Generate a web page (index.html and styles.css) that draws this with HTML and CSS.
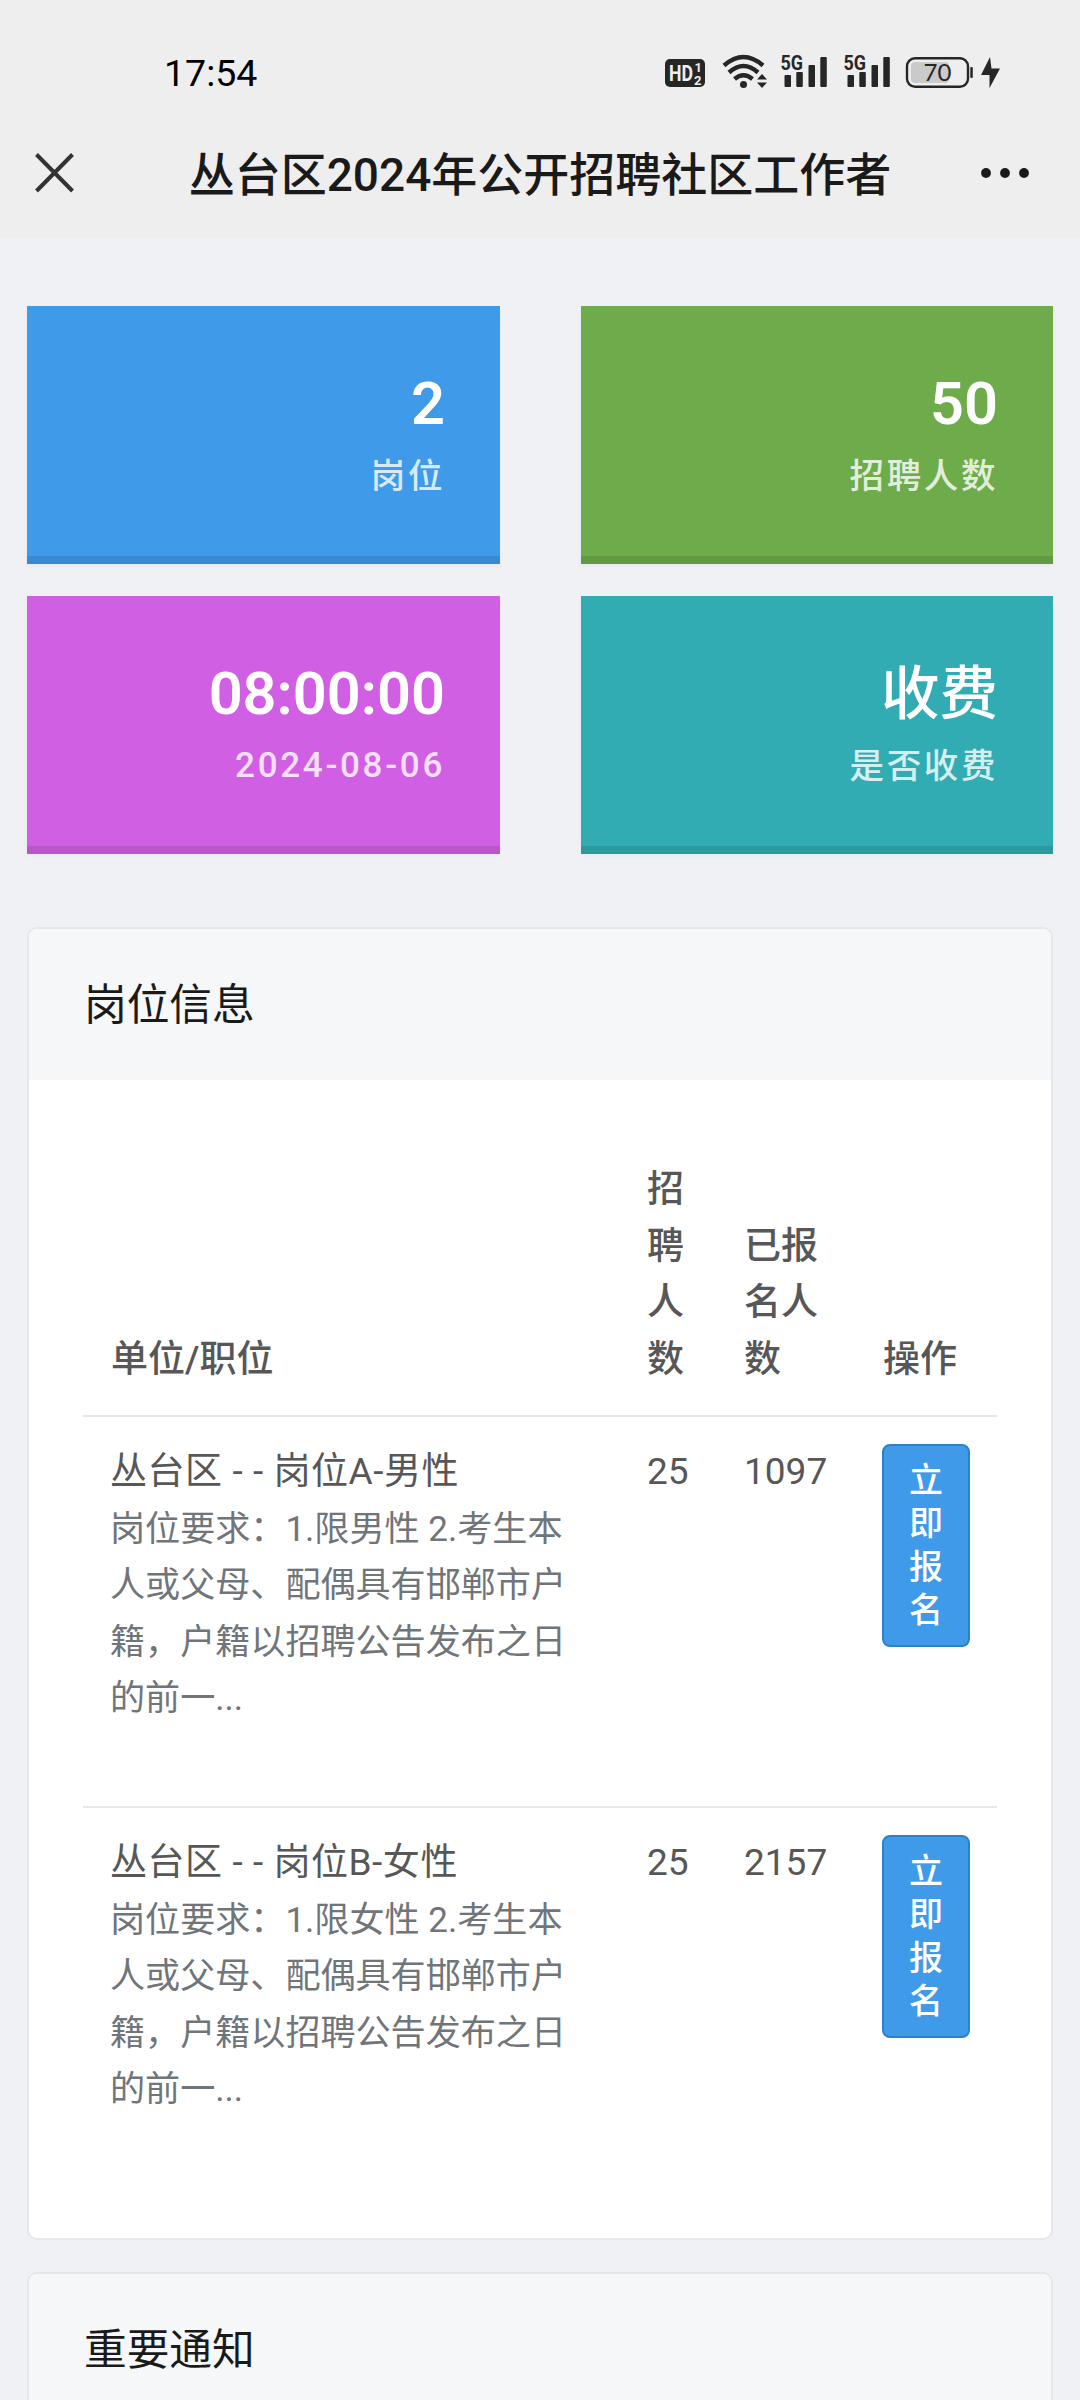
FILE: index.html
```html
<!DOCTYPE html>
<html lang="zh-CN">
<head>
<meta charset="utf-8">
<title>丛台区2024年公开招聘社区工作者</title>
<link rel="stylesheet" href="styles.css">
</head>
<body>
<header class="top">
  <div class="status">
    <span class="clock">17:54</span>
    <svg class="status-icons" width="340" height="40" viewBox="662 52 340 40">
      <rect x="665" y="59" width="40" height="28" rx="5" fill="#262626"/>
      <g fill="#eee" font-family="Roboto, sans-serif" font-weight="700">
        <text x="669" y="81" font-size="22" textLength="24" lengthAdjust="spacingAndGlyphs">HD</text>
        <text x="694.5" y="72" font-size="13">1</text>
        <text x="694" y="84.5" font-size="13">2</text>
      </g>
      <g fill="none" stroke="#262626" stroke-width="4.4">
        <path d="M724 65.500Q743.500 48.500 763 65.500"/>
        <path d="M729 72.500Q743.500 59.500 758 72.500"/>
        <path d="M734.500 79Q743.500 71.500 752.500 79"/>
      </g>
      <circle cx="743.500" cy="84.500" r="3.500" fill="#262626"/>
      <path d="M757 79.500l5-5.500 5 5.500zM757 82.500h10l-5 5.500z" fill="#262626"/>
      <g id="signal" fill="#262626">
        <text x="780.500" y="70" font-family="Roboto, sans-serif" font-weight="700" font-size="20.500" textLength="22.500" lengthAdjust="spacingAndGlyphs">5G</text>
        <rect x="784.500" y="75" width="6.500" height="12" rx="1"/>
        <rect x="796.300" y="72" width="6.500" height="15" rx="1"/>
        <rect x="808.500" y="65" width="6.500" height="22" rx="1"/>
        <rect x="820.300" y="57" width="6.500" height="30" rx="1"/>
      </g>
      <use href="#signal" x="63"/>
      <rect x="911" y="62" width="38" height="21" rx="4" fill="#cacaca"/>
      <rect x="907" y="58.200" width="61" height="28.600" rx="8" fill="none" stroke="#262626" stroke-width="2.400"/>
      <rect x="970.300" y="67" width="2.500" height="11" rx="1" fill="#262626"/>
      <text x="937.500" y="81.300" text-anchor="middle" font-family="Lato, sans-serif" font-size="24" fill="#262626">70</text>
      <path d="M990 57L981 75h8.500v13L1000 68.500h-8.500z" fill="#262626"/>
    </svg>
  </div>
  <div class="nav">
    <svg width="40" height="40" viewBox="0 0 40 40"><path d="M2.500 1.500L38.500 38M38.500 1.500L2.500 38" stroke="#333" stroke-width="4" fill="none"/></svg>
    <h1 class="nav-title">丛台区2024年公开招聘社区工作者</h1>
    <svg width="50" height="12" viewBox="0 0 50 12" fill="#1a1a1a"><circle cx="6" cy="6" r="4.900"/><circle cx="25" cy="6" r="4.900"/><circle cx="44" cy="6" r="4.900"/></svg>
  </div>
</header>
<main class="page">
  <section class="stats">
    <div class="stat blue"><div class="num">2</div><div class="label">岗位</div></div>
    <div class="stat green"><div class="num">50</div><div class="label">招聘人数</div></div>
    <div class="stat purple"><div class="num">08:00:00</div><div class="label label-date">2024-08-06</div></div>
    <div class="stat teal"><div class="num num-text">收费</div><div class="label">是否收费</div></div>
  </section>
  <section class="panel">
    <h2 class="panel-head">岗位信息</h2>
    <div class="panel-body">
      <table class="jobs">
        <colgroup><col class="c-job"><col class="c-need"><col class="c-done"><col class="c-act"></colgroup>
        <thead><tr><th>单位/职位</th><th>招聘人数</th><th>已报名人数</th><th>操作</th></tr></thead>
        <tbody>
          <tr><td><div class="job">丛台区 - - 岗位A-男性</div><p class="desc">岗位要求：1.限男性 2.考生本人或父母、配偶具有邯郸市户籍，户籍以招聘公告发布之日的前一...</p></td><td>25</td><td>1097</td><td><button class="apply" type="button">立即报名</button></td></tr>
          <tr><td><div class="job">丛台区 - - 岗位B-女性</div><p class="desc">岗位要求：1.限女性 2.考生本人或父母、配偶具有邯郸市户籍，户籍以招聘公告发布之日的前一...</p></td><td>25</td><td>2157</td><td><button class="apply" type="button">立即报名</button></td></tr>
        </tbody>
      </table>
    </div>
  </section>
  <section class="panel panel-notice">
    <h2 class="panel-head">重要通知</h2>
  </section>
</main>
</body>
</html>
```
FILE: styles.css
```css
* { box-sizing: border-box; }

body {
  margin: 0;
  height: 2400px;
  background: #f0f1f5;
  color: #575757;
  font-family: Roboto, "Noto Sans CJK SC", sans-serif;
}

.top {
  height: 238px;
  background: #eee;
}

.status {
  height: 108px;
  padding: 37px 78px 0 164px;
  display: flex;
  justify-content: space-between;
  align-items: flex-start;
}

.clock {
  font-size: 37.500px;
  line-height: 72px;
  color: #000;
}

.status-icons { margin-top: 15px; }

.nav {
  height: 130px;
  padding: 0 50px 0 34px;
  display: grid;
  grid-template-columns: 40px 1fr 50px;
  align-items: center;
}

.nav-title {
  margin: 0;
  padding: 4px 0 0 26px;
  font-size: 46px;
  line-height: 60px;
  font-weight: 500;
  text-align: center;
  color: #1a1a1a;
}

.page { padding: 68px 27px 0; }

.stats {
  display: grid;
  grid-template-columns: 473px 472px;
  column-gap: 81px;
  row-gap: 32px;
}

.stat {
  height: 258px;
  padding: 60px 55px 0;
  border-bottom: 8px solid rgba(0, 0, 0, .1);
  box-shadow: 0 2px 4px rgba(0, 0, 0, .04);
  color: #fff;
  text-align: right;
  font-weight: 500;
}

.num {
  font-size: 59.500px;
  line-height: 76px;
  font-weight: 600;
}

.num-text {
  font-size: 58.500px;
  font-weight: 500;
}

.label {
  height: 60px;
  font-size: 34.500px;
  line-height: 68px;
  letter-spacing: 2.600px;
  opacity: .8;
}

.label-date {
  font-size: 35px;
  letter-spacing: 2.700px;
}

.blue { background-color: #409aea; }
.green { background-color: #6eab4b; }
.purple { background-color: #d05fe3; }
.teal { background-color: #30acb2; }

.panel {
  margin-top: 73px;
  border: 2px solid #e6e7ea;
  border-radius: 10px;
  background: #fff;
  overflow: hidden;
}

.panel-head {
  margin: 0;
  height: 151px;
  padding-left: 55px;
  background: #f6f7f9;
  font-size: 42.700px;
  line-height: 153px;
  font-weight: 400;
  color: #1a1a1a;
}

/* The notice card carries on below the fold, so it has no bottom edge. */
.panel-notice {
  height: 128px;
  margin-top: 32px;
  border-bottom: 0;
  border-radius: 10px 10px 0 0;
}

.panel-body {
  height: 1158px;
  padding: 53px 54px 0;
}

.jobs {
  width: 914px;
  table-layout: fixed;
  border-collapse: collapse;
  font-size: 37px;
  line-height: 56.500px;
}

.c-job { width: 536px; }
.c-need { width: 97px; }
.c-done { width: 139px; }
.c-act { width: 142px; }

.jobs th {
  height: 283px;
  padding: 0 27px 27px 28px;
  text-align: left;
  vertical-align: bottom;
  font-weight: 500;
  border-bottom: 2px solid #e6e7ea;
}

.jobs td {
  height: 391px;
  padding: 27px 0 0 28px;
  vertical-align: top;
}

.jobs td:first-child {
  padding-left: 27px;
  padding-right: 27px;
}

.jobs tbody tr + tr td { border-top: 2px solid #e6e7ea; }

.job { letter-spacing: .550px; }

.desc {
  margin: 0;
  font-size: 35.100px;
  color: #70757a;
}

.apply {
  display: block;
  width: 88px;
  height: 203px;
  margin-left: -1px;
  padding: 12px 24px;
  border: 2px solid #2b82c9;
  border-radius: 8px;
  background: #409aea;
  color: #fff;
  font: 500 34px/43.500px Roboto, "Noto Sans CJK SC", sans-serif;
}
```
